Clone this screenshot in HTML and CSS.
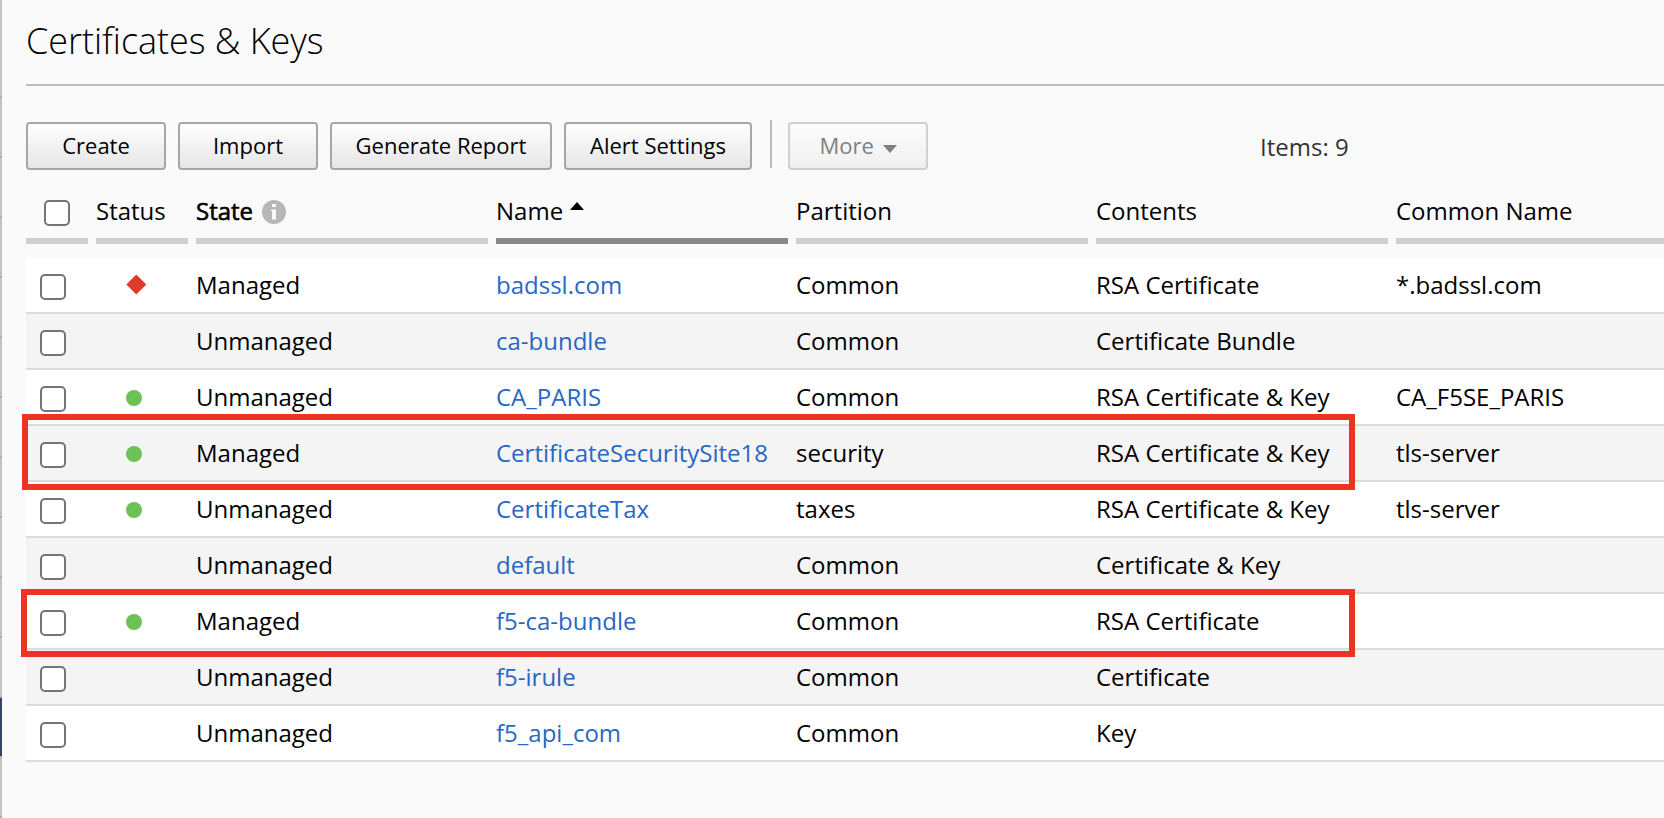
FILE: index.html
```
<!DOCTYPE html>
<html lang="en">
<head>
<meta charset="utf-8">
<title>Certificates &amp; Keys</title>
<link rel="stylesheet" href="styles.css">
</head>
<body>
<div class="app">
  <aside class="rail"><div class="rail-active"></div></aside>
  <main class="page">
    <h1 class="title"><span>Certificates &amp; Keys</span></h1>
    <div class="toolbar">
      <button class="btn btn-fixed">Create</button>
      <button class="btn btn-fixed">Import</button>
      <button class="btn btn-report">Generate Report</button>
      <button class="btn btn-alert">Alert Settings</button>
      <span class="sep"></span>
      <button class="btn btn-fixed btn-off" disabled>More <svg class="caret" width="14" height="8" viewBox="0 0 14 8"><path d="M0 0h14L7 8z" fill="#808080"/></svg></button>
      <span class="items">Items: 9</span>
    </div>
    <div class="grid head">
      <div class="th th-check"><input class="check" type="checkbox"></div>
      <div class="th">Status</div>
      <div class="th"><span class="strong">State</span><svg class="info" width="24" height="24" viewBox="0 0 24 24"><circle cx="12" cy="12" r="12" fill="#b7b7b7"/><path d="M10 4h4v3h-4zM9 9.500h5V19.500h-4V11H9z" fill="#fafafa"/></svg></div>
      <div class="th sorted"><span>Name</span><svg class="asc" width="14" height="8" viewBox="0 0 14 8"><path d="M0 8h14L7 0z" fill="#000"/></svg></div>
      <div class="th">Partition</div>
      <div class="th">Contents</div>
      <div class="th">Common Name</div>
    </div>
    <div class="rows">
      <div class="grid row"><input class="check" type="checkbox"><span><i class="bad"></i></span><span>Managed</span><a>badssl.com</a><span>Common</span><span>RSA Certificate</span><span>*.badssl.com</span></div>
      <div class="grid row"><input class="check" type="checkbox"><span></span><span>Unmanaged</span><a>ca-bundle</a><span>Common</span><span>Certificate Bundle</span><span></span></div>
      <div class="grid row"><input class="check" type="checkbox"><span><i class="ok"></i></span><span>Unmanaged</span><a>CA_PARIS</a><span>Common</span><span>RSA Certificate &amp; Key</span><span>CA_F5SE_PARIS</span></div>
      <div class="grid row"><input class="check" type="checkbox"><span><i class="ok"></i></span><span>Managed</span><a>CertificateSecuritySite18</a><span>security</span><span>RSA Certificate &amp; Key</span><span>tls-server</span><b class="mark mark-first"></b></div>
      <div class="grid row"><input class="check" type="checkbox"><span><i class="ok"></i></span><span>Unmanaged</span><a>CertificateTax</a><span>taxes</span><span>RSA Certificate &amp; Key</span><span>tls-server</span></div>
      <div class="grid row"><input class="check" type="checkbox"><span></span><span>Unmanaged</span><a>default</a><span>Common</span><span>Certificate &amp; Key</span><span></span></div>
      <div class="grid row"><input class="check" type="checkbox"><span><i class="ok"></i></span><span>Managed</span><a>f5-ca-bundle</a><span>Common</span><span>RSA Certificate</span><span></span><b class="mark mark-second"></b></div>
      <div class="grid row"><input class="check" type="checkbox"><span></span><span>Unmanaged</span><a>f5-irule</a><span>Common</span><span>Certificate</span><span></span></div>
      <div class="grid row"><input class="check" type="checkbox"><span></span><span>Unmanaged</span><a>f5_api_com</a><span>Common</span><span>Key</span><span></span></div>
    </div>
  </main>
</div>
</body>
</html>
```
FILE: styles.css
```
* { box-sizing: border-box; }
body { margin: 0; background: #fafafa; color: #000; font: 24px/54px "Open Sans", "Noto Sans", sans-serif; overflow: hidden; }
.app { display: flex; height: 818px; }
.rail { width: 2px; padding-top: 698px; background: linear-gradient(#c3c3c5, #c3c3c5) 0 0 / 2px 90px no-repeat, repeating-linear-gradient(#c3c3c5 0 36px, #a9b0b8 36px 38px, #c3c3c5 38px 60px); }
.rail-active { height: 58px; background: #34445f; }
.page { flex: 1; min-width: 0; padding-left: 24px; }
.title { margin: 0; height: 86px; padding-top: 14px; border-bottom: 2px solid #bdbdbd; font-weight: 300; font-size: 36px; line-height: 54px; letter-spacing: -.05px; }
.toolbar { display: flex; align-items: center; gap: 12px; height: 48px; margin-top: 36px; }
.btn { height: 48px; padding: 0 0 2px; border: 2px solid #a6a6a6; border-radius: 4px; background: linear-gradient(#fefefe, #e6e6e6); color: #000; font: 22px/42px "Open Sans", "Noto Sans", sans-serif; white-space: nowrap; }
.btn-fixed { width: 140px; }
.btn-report { width: 222px; }
.btn-alert { width: 188px; }
.btn-off { border-color: #d0d0d0; color: #808080; background: linear-gradient(#fcfcfc, #f0f0f0); }
.caret { margin-left: 3px; vertical-align: 1px; }
.sep { width: 2px; height: 48px; margin: -4px 4px 0 6px; background: #bdbdbd; }
.items { margin-left: 320px; padding-top: 2px; color: #333; line-height: 46px; }
.grid { display: grid; grid-template-columns: 62px 92px 292px 292px 292px 292px 292px; column-gap: 8px; }
.head { height: 74px; }
.th { display: flex; height: 74px; padding-top: 14px; border-bottom: 6px solid #cfcfcf; white-space: nowrap; line-height: 54px; }
.sorted { border-color: #888; }
.th-check { padding: 30px 0 0 18px; }
.strong { -webkit-text-stroke: .6px #000; }
.info { margin: 16px 0 0 9px; }
.asc { margin: 18px 0 0 7px; }
.check { appearance: none; width: 26px; height: 26px; margin: 0; border: 2px solid #757575; border-radius: 5px; background: #fff; }
.rows { margin-top: 14px; }
.row { position: relative; height: 56px; border-bottom: 2px solid #dcdcdc; background: #fff; white-space: nowrap; }
.row:nth-child(even) { background: #f4f4f4; }
.row > .check { margin: 16px 0 0 14px; }
.row a { color: #2767c5; }
.ok, .bad { display: block; }
.ok { width: 16px; height: 16px; margin: 19.5px 0 0 30px; border-radius: 50%; background: #6dc157; }
.bad { width: 20px; height: 20px; margin: 16.5px 0 0 30.3px; background: #e0392e; clip-path: polygon(50% 0, 100% 50%, 50% 100%, 0 50%); }
.mark { position: absolute; z-index: 1; border: 6px solid #ed3323; pointer-events: none; }
.mark-first { left: -4px; top: -12px; width: 1333px; height: 76px; }
.mark-second { left: -5px; top: -5px; width: 1333.500px; height: 68px; }
```
